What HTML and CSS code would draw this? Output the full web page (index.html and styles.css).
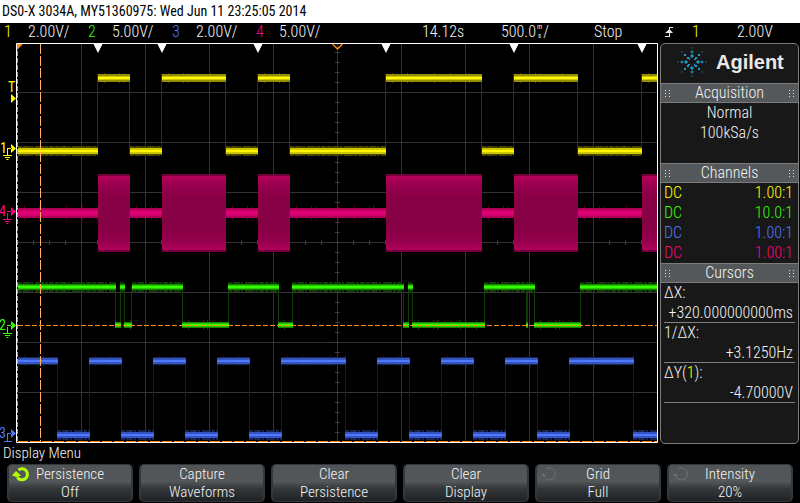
FILE: index.html
```html
<!DOCTYPE html>
<html lang="en">
<head>
<meta charset="utf-8">
<meta name="viewport" content="width=device-width, initial-scale=1">
<title>DSO-X 3034A</title>
<link rel="stylesheet" href="styles.css">
</head>
<body>
<header class="title">DS0-X 3034A, MY51360975: Wed Jun 11 23:25:05 2014</header>
<div class="status">
  <span class="c1">1</span><span>2.00V/</span>
  <span class="c2">2</span><span>5.00V/</span>
  <span class="c3">3</span><span>2.00V/</span>
  <span class="c4">4</span><span>5.00V/</span>
  <span>14.12s</span>
  <span class="timebase">500.0<span class="unit"><i>m</i><i>s</i></span>/</span>
  <span>Stop</span>
  <svg class="edge" viewBox="0 0 8 11" aria-label="Rising edge"><path d="M0 10h4V1h4v1H5v9H0z"/><path d="M0 7h8L4.500 3z"/></svg>
  <span class="c1">1</span><span>2.00V</span>
</div>
<main class="main">
  <svg class="scope" viewBox="0 43 660 401" role="img" aria-label="Waveforms">
    <defs>
      <linearGradient id="burst" x1="0" y1="0" x2="0" y2="1">
        <stop offset="0" stop-color="#b4005c"/><stop offset=".12" stop-color="#98004e"/>
        <stop offset=".3" stop-color="#880046"/><stop offset=".7" stop-color="#880046"/>
        <stop offset=".9" stop-color="#98004e"/><stop offset="1" stop-color="#b4005c"/>
      </linearGradient>
      <path id="y-hi" d="M98 78h32M162 78h64M258 78h32M386 78h96M514 78h64M642 78h15"/>
      <path id="y-lo" d="M18 151h80M130 151h32M226 151h32M290 151h96M482 151h32M578 151h64"/>
      <path id="p-lo" d="M18 213h80M130 213h32M226 213h32M290 213h96M482 213h32M578 213h64"/>
      <path id="g-hi" d="M18 287h98M120 287h5M132 287h51M228 287h51M292 287h112M408 287h5M484 287h51M580 287h77"/>
      <path id="g-lo" d="M115 325h6M124 325h8M182 325h47M278 325h15M403 325h6M412 325h73M526 325h2M534 325h47"/>
      <path id="b-hi" d="M18 361h40M89 361h33M153 361h33M217 361h33M281 361h65M377 361h33M441 361h33M505 361h33M569 361h65"/>
      <path id="b-lo" d="M57 435h33M121 435h33M185 435h33M249 435h33M345 435h33M409 435h33M473 435h33M537 435h33M633 435h24"/>
      <g id="ground"><path d="M0 0v6M-4.500 6.500h9M-2.500 8.500h5M-1 10.500h2" fill="none" stroke="currentColor"/></g>
    </defs>

    <path class="grid" d="M81.500 44v398M145.500 44v398M209.500 44v398M273.500 44v398M337.500 44v398M401.500 44v398M465.500 44v398M529.500 44v398M593.500 44v398M17 92.500h640M17 142.500h640M17 192.500h640M17 242.500h640M17 292.500h640M17 342.500h640M17 392.500h640"/>
    <path class="ticks-x" d="M33 242.500h624"/>
    <path class="ticks-y" d="M337.500 52v390"/>

    <g class="yellow">
      <path class="edges" d="M97.500 74v80M129.500 74v80M161.500 74v80M225.500 74v80M257.500 74v80M289.500 74v80M385.500 74v80M481.500 74v80M513.500 74v80M577.500 74v80M641.500 74v80"/>
      <use href="#y-hi" class="w10 sparse faint"/><use href="#y-hi" class="w8 mid"/><use href="#y-hi" class="w4 strong"/><use href="#y-hi" class="w2 full"/>
      <use href="#y-lo" class="w10 dense faint"/><use href="#y-lo" class="w8 faint"/><use href="#y-lo" class="w6 strong"/><use href="#y-lo" class="w2 full"/>
    </g>
    <g class="pink">
      <use href="#p-lo" class="w14 sparse faint"/><use href="#p-lo" class="w10 mid"/><use href="#p-lo" class="w6 strong"/><use href="#p-lo" class="w2 full"/>
      <path class="burst-edge" d="M98 174h32v78H98zM162 174h64v78h-64zM258 174h32v78h-32zM386 174h96v78h-96zM514 174h64v78h-64zM642 174h15v78h-15z"/>
      <path fill="url(#burst)" d="M98 176h32v74H98zM162 176h64v74h-64zM258 176h32v74h-32zM386 176h96v74h-96zM514 176h64v74h-64zM642 176h15v74h-15z"/>
    </g>
    <g class="green">
      <path class="edges" d="M115.500 287v38M120.500 287v38M124.500 287v38M131.500 287v38M182.500 287v38M228.500 287v38M278.500 287v38M292.500 287v38M403.500 287v38M408.500 287v38M412.500 287v38M484.500 287v38M526.500 287v38M527.500 287v38M534.500 287v38M580.500 287v38"/>
      <use href="#g-hi" class="w10 dense faint"/><use href="#g-hi" class="w6 mid"/><use href="#g-hi" class="w4 strong"/><use href="#g-hi" class="w2 full"/>
      <use href="#g-lo" class="w10 sparse faint"/><use href="#g-lo" class="w6 mid"/><use href="#g-lo" class="w4 strong"/><use href="#g-lo" class="w2 full"/>
    </g>
    <g class="blue">
      <path class="edges" d="M57.500 361v74M89.500 361v74M121.500 361v74M153.500 361v74M185.500 361v74M217.500 361v74M249.500 361v74M281.500 361v74M345.500 361v74M377.500 361v74M409.500 361v74M441.500 361v74M473.500 361v74M505.500 361v74M537.500 361v74M569.500 361v74M633.500 361v74"/>
      <use href="#b-hi" class="w10 sparse faint"/><use href="#b-hi" class="w8 faint"/><use href="#b-hi" class="w6 mid"/><use href="#b-hi" class="w2 full"/>
      <use href="#b-lo" class="w10 dense faint"/><use href="#b-lo" class="w6 mid"/><use href="#b-lo" class="w2 full"/>
    </g>

    <path class="frame" d="M16.500 43.500h641v399h-641z"/>
    <path class="cursor-a" d="M17.500 44v398"/>
    <path class="cursor-b" d="M40.500 44v398"/>
    <path class="cursor-a" d="M18 325.500h639"/>
    <path class="cursor-c" d="M18 441.500h639"/>
    <path fill="#fff" d="M93.500 44h9l-4.500 9zM157.500 44h9l-4.500 9zM253.500 44h9l-4.500 9zM381.500 44h9l-4.500 9zM509.500 44h9l-4.500 9zM637.500 44h9l-4.500 9z"/>
    <path fill="#ff8a10" d="M17 44h6l-6 6z"/>
    <path fill="none" stroke="#ff8a10" stroke-width="1.500" d="m332.500 44 5 5 5-5"/>

    <g class="c1 mark"><text x="8" y="92">T</text><path d="M11 94v9l5-4.500z"/><text x="0" y="153">1</text><path d="M11 144v9l5-4.500zM7 148h5v1H7z"/><use href="#ground" x="7.500" y="149"/></g>
    <g class="c4 mark"><text x="-1" y="216">4</text><path d="M11 207v9l5-4.500zM7 211h5v1H7z"/><use href="#ground" x="7.500" y="213"/></g>
    <g class="c2 mark"><text x="-1" y="330">2</text><path d="M11 321v9l5-4.500zM7 325h5v1H7z"/><use href="#ground" x="7.500" y="327"/></g>
    <g class="c3 mark"><text x="-1" y="438">3</text><path d="M11 429v9l5-4.500zM7 433h5v1H7zM7 433h1v8H7zM4 441h8v1H4z"/></g>
  </svg>

  <aside class="panel">
    <div class="brand">
      <svg class="spark" viewBox="-15 -15 30 30" aria-hidden="true">
        <defs><g id="ray"><path d="M-.5-14.500h1v1h-1zM-.5-11.500h1v1h1v1h-1v1h-1v-1h-1v-1h1zM-1-7.500h2v1h1v1h-1v1h-2v-1h-1v-1h1z"/></g>
        <g id="diag"><path d="M-10.500-10.500h1v1h-1zM-8-8h2v2h-2zM-5-5h2v1h1v2h-1v-1h-2z"/></g></defs>
        <use href="#ray"/><use href="#ray" transform="rotate(90)"/><use href="#ray" transform="rotate(180)"/><use href="#ray" transform="rotate(270)"/>
        <use href="#diag"/><use href="#diag" transform="rotate(90)"/><use href="#diag" transform="rotate(180)"/><use href="#diag" transform="rotate(270)"/>
      </svg>
      <strong>Agilent</strong>
    </div>
    <h2>Acquisition</h2>
    <div class="acq"><div>Normal</div><div>100kSa/s</div></div>
    <h2>Channels</h2>
    <div class="channels">
      <div class="row c1"><span>DC</span><span>1.00:1</span></div>
      <div class="row c2"><span>DC</span><span>10.0:1</span></div>
      <div class="row c3"><span>DC</span><span>1.00:1</span></div>
      <div class="row c4"><span>DC</span><span>1.00:1</span></div>
    </div>
    <h2>Cursors</h2>
    <dl class="cursors">
      <dt>ΔX:</dt><dd>+320.000000000ms</dd>
      <dt>1/ΔX:</dt><dd>+3.1250Hz</dd>
      <dt>ΔY(<span class="c1">1</span>):</dt><dd>-4.70000V</dd>
    </dl>
  </aside>
</main>
<div class="menu-title">Display Menu</div>
<nav class="softkeys">
  <button type="button"><svg class="knob on" viewBox="0 0 18 16" aria-hidden="true"><path d="M5.500 11.500a5.500 5.500 0 1 0 1-7.500"/><path class="head" d="M0 9.500 4 5l5 4.500-3 1-.5 1.500-2.500-1.500z"/></svg>Persistence<br>Off</button>
  <button type="button">Capture<br>Waveforms</button>
  <button type="button">Clear<br>Persistence</button>
  <button type="button">Clear<br>Display</button>
  <button type="button"><svg class="knob" viewBox="0 0 18 16" aria-hidden="true"><path d="M3.500 9a6 6 0 1 0 3-6.300"/><path class="head" d="M1 10l2.500-3L6 10z"/></svg>Grid<br>Full</button>
  <button type="button"><svg class="knob" viewBox="0 0 18 16" aria-hidden="true"><path d="M3.500 9a6 6 0 1 0 3-6.300"/><path class="head" d="M1 10l2.500-3L6 10z"/></svg>Intensity<br>20%</button>
</nav>
</body>
</html>
```
FILE: styles.css
```css
* { box-sizing: border-box; }
body {
  margin: 0;
  background: #000;
  color: #f4f4f4;
  font: 300 16px/20px "Roboto Condensed", "Open Sans Condensed", Roboto, sans-serif;
}
.title {
  height: 23px;
  padding-left: 2px;
  background: #fff;
  color: #000;
  font-size: 14px;
  font-weight: 400;
  line-height: 23px;
  white-space: nowrap;
}
.status {
  display: grid;
  grid-template-columns: 24fr 60fr 24fr 60fr 24fr 60fr 23fr 143fr 79fr 93fr 71fr 27fr 45fr 63fr;
  height: 20px;
  padding-left: 4px;
  line-height: 18px;
  white-space: nowrap;
}
.status > * { min-width: 0; }
.timebase { display: flex; }
.unit {
  display: flex;
  flex-direction: column;
  align-items: center;
  padding: 0 1px;
  font-size: 7px;
  font-weight: 400;
  line-height: 9px;
}
.unit i { font-style: normal; }
.edge { width: 8px; height: 11px; margin-top: 3px; fill: #e8e8e8; }
.c1 { color: #ff0; }
.c2 { color: #3f0; }
.c3 { color: #5078ff; }
.c4 { color: #ff0080; }

.main { display: flex; align-items: flex-start; }
.scope { flex: 1; min-width: 0; display: block; }
.scope .grid { stroke: #333; fill: none; }
.ticks-x { stroke: #3c3c3c; stroke-width: 5; stroke-dasharray: 1 15; }
.ticks-y { stroke: #3c3c3c; stroke-width: 5; stroke-dasharray: 1 9; }
.yellow { --faint: #4a4700; --mid: #938d00; --strong: #cdc600; --full: #fff600; --edge: #333200; }
.pink { --faint: #4c0028; --mid: #b0005a; --strong: #d4006c; --full: #e40076; --edge: #4c0028; }
.green { --faint: #0b3f02; --mid: #198000; --strong: #24c800; --full: #33ff00; --edge: #0d3d04; }
.blue { --faint: #172450; --mid: #3454c0; --strong: #4064e0; --full: #5078ff; --edge: #111a38; }
.faint { stroke: var(--faint); }
.mid { stroke: var(--mid); }
.strong { stroke: var(--strong); }
.full { stroke: var(--full); }
.edges { stroke: var(--edge); }
.burst-edge { fill: #700039; }
.w2 { stroke-width: 2; }
.w4 { stroke-width: 4; }
.w6 { stroke-width: 6; }
.w8 { stroke-width: 8; }
.w10 { stroke-width: 10; }
.w14 { stroke-width: 14; }
.sparse { stroke-dasharray: 0 6 1 14 1 3 1 22 1 9; }
.dense { stroke-dasharray: 4 1 7 1 2 2 9 1 3 1 5 1; }
.frame { fill: none; stroke: #fff; }
.cursor-a { stroke: #ff8a10; stroke-dasharray: 5 2; }
.cursor-b { stroke: #ffb060; stroke-dasharray: 10 2; }
.cursor-c { stroke: #ff8a10; stroke-dasharray: 10 2; }
.mark { fill: currentColor; font-size: 14px; font-weight: 400; }

.panel {
  flex: 0 0 139px;
  align-self: stretch;
  margin-right: 1px;
  border: 1px solid #7c7c7c;
  border-radius: 5px;
  background: #181818;
  overflow: hidden;
}
.brand {
  display: flex;
  gap: 9px;
  height: 39px;
  padding: 3px 0 0 16px;
  color: #e8e8e8;
  font: bold 20px/30px "Liberation Sans", Arial, sans-serif;
}
.spark { width: 30px; height: 30px; fill: #1c9cc8; }
.panel h2 {
  display: flex;
  align-items: center;
  justify-content: space-between;
  height: 20px;
  margin: 0;
  padding: 0 4px;
  border: solid #7c7c7c;
  border-width: 1px 0;
  background: #54585a;
  font-size: 16px;
  font-weight: inherit;
  line-height: 18px;
}
.panel h2::before, .panel h2::after {
  content: "";
  width: 5px;
  height: 7px;
  background:
    repeating-linear-gradient(#54585a00 0 1px, #54585a 1px 3px),
    repeating-linear-gradient(90deg, #ddd 0 1px, #54585a 1px 4px);
}
.acq { height: 60px; text-align: center; }
.channels { height: 80px; padding: 0 5px 0 3px; }
.row { display: flex; justify-content: space-between; }
.cursors { margin: 0 3px; }
.cursors dt { height: 20px; }
.cursors dd { height: 20px; margin: 0; padding-right: 2px; border-bottom: 1px solid #808080; text-align: right; }
.menu-title { height: 20px; padding-left: 3px; font-size: 15px; line-height: 18px; }
.softkeys { display: grid; grid-template-columns: repeat(6, 1fr); gap: 6px; padding: 0 7px; }
.softkeys button {
  position: relative;
  height: 38px;
  padding: 0 0 2px;
  border: 1px solid #34383a;
  border-width: 1px 2px;
  border-radius: 5px;
  background: linear-gradient(#505456, #54585a 45%, #34383a 65%, #1e2224);
  color: #f4f4f4;
  font: inherit;
  font-size: 15px;
  line-height: 18px;
}
.knob { position: absolute; left: 3px; top: 1px; width: 18px; height: 16px; fill: none; stroke: #70706c; }
.knob .head { fill: #70706c; stroke: none; }
.knob.on { stroke: #b0ff00; stroke-width: 3; }
.knob.on .head { fill: #b0ff00; }
```
